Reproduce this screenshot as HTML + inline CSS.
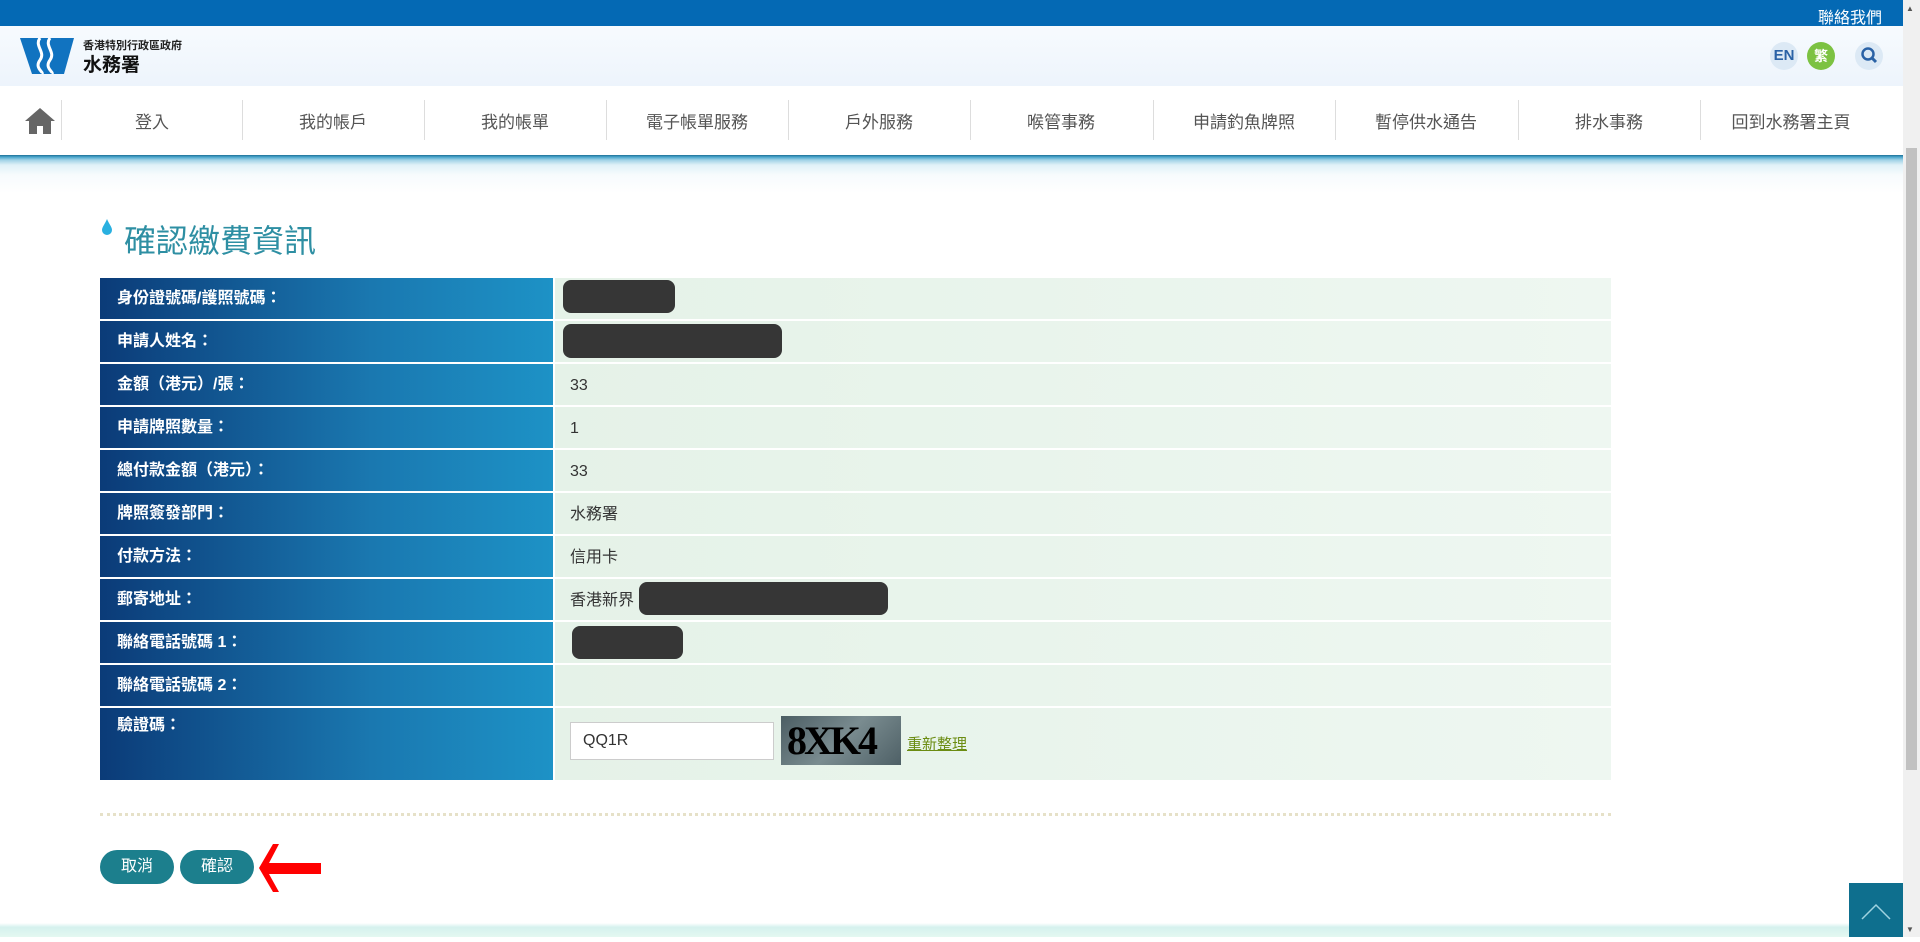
<!DOCTYPE html>
<html><head><meta charset="utf-8">
<style>
*{margin:0;padding:0;box-sizing:border-box}
body{width:1920px;height:937px;overflow:hidden;position:relative;background:#fff;font-family:"Liberation Sans","Noto Sans CJK TC",sans-serif;}
.abs{position:absolute}
#top{left:0;top:0;width:1903px;height:26px;background:#0469b4}
#top span{position:absolute;right:21px;top:4px;color:#fff;font-size:16px}
#hdr{left:0;top:26px;width:1903px;height:60px;background:linear-gradient(#f7fbfe,#edf4fc)}
#nav{left:0;top:86px;width:1903px;height:69px;background:#fff}
.sep{position:absolute;top:14px;width:1px;height:40px;background:#ddd}
.ni{position:absolute;top:22px;width:182px;text-align:center;color:#555;font-size:17px}
#water{left:0;top:155px;width:1903px;height:40px;background:linear-gradient(#1d6f96 0,#4aa6cc 2px,#9fd2e6 5px,#e0f1f8 10px,#f7fbfd 20px,#fff 38px)}
.circ{position:absolute;top:16px;width:28px;height:28px;border-radius:50%;text-align:center;line-height:28px;font-size:15px;font-weight:bold}
.row{position:absolute;left:100px;width:1511px;height:41px}
.lab{position:absolute;left:0;top:0;width:453px;height:100%;background:linear-gradient(90deg,#0b3b78,#1a78b0 60%,#1d92c6);color:#fff;font-weight:bold;font-size:16px;line-height:41px;padding-left:17px}
.val{position:absolute;left:455px;top:0;right:0;height:100%;background:linear-gradient(90deg,#e5f2e8,#eef7f1);color:#333;font-size:16px;line-height:43px;padding-left:15px}
.blob{position:absolute;background:#363636;border-radius:8px}
.btn{position:absolute;top:850px;height:34px;width:74px;border-radius:17px;background:#1c7f8d;color:#fff;font-size:16px;text-align:center;line-height:34px}
</style></head><body>
<div id="top" class="abs"><span>聯絡我們</span></div>
<div id="hdr" class="abs">
<svg class="abs" style="left:20px;top:12px" width="56" height="36" viewBox="0 0 56 36"><polygon points="0,0 54,0 44,36 12,36" fill="#1173c0"/><path d="M20 0c-6 8 6 14 0 22s4 12 2 14M30 0c-6 8 6 14 0 22s4 12 2 14" stroke="#fff" stroke-width="3" fill="none"/></svg>
<div class="abs" style="left:83px;top:11px;font-size:11px;color:#222;font-weight:bold">香港特別行政區政府</div>
<div class="abs" style="left:83px;top:24px;font-size:19px;color:#111;font-weight:bold">水務署</div>
<div class="circ" style="left:1770px;background:#dce9f5;color:#2a62a6">EN</div>
<div class="circ" style="left:1807px;background:#7cc242;color:#fff;font-size:14px">繁</div>
<div class="circ" style="left:1855px;background:#dce9f5;color:#2a62a6">
<svg width="28" height="28"><circle cx="13" cy="12" r="5.5" stroke="#2a62a6" stroke-width="2.5" fill="none"/><line x1="17" y1="16" x2="21" y2="20" stroke="#2a62a6" stroke-width="3"/></svg></div>
</div>
<div id="nav" class="abs">
<svg class="abs" style="left:25px;top:22px" width="30" height="26" viewBox="0 0 30 26"><path d="M15 0L0 13h4v13h8v-8h6v8h8V13h4L15 0z" fill="#666"/></svg>
<div class="sep" style="left:61px"></div><div class="sep" style="left:242px"></div><div class="sep" style="left:424px"></div><div class="sep" style="left:606px"></div><div class="sep" style="left:788px"></div><div class="sep" style="left:970px"></div><div class="sep" style="left:1153px"></div><div class="sep" style="left:1335px"></div><div class="sep" style="left:1518px"></div><div class="sep" style="left:1700px"></div>
<div class="ni" style="left:61px">登入</div><div class="ni" style="left:242px">我的帳戶</div><div class="ni" style="left:424px">我的帳單</div><div class="ni" style="left:606px">電子帳單服務</div><div class="ni" style="left:788px">戶外服務</div><div class="ni" style="left:970px">喉管事務</div><div class="ni" style="left:1153px">申請釣魚牌照</div><div class="ni" style="left:1335px">暫停供水通告</div><div class="ni" style="left:1518px">排水事務</div><div class="ni" style="left:1700px">回到水務署主頁</div>
</div>
<div id="water" class="abs"></div>
<svg class="abs" style="left:101px;top:218px" width="12" height="18"><path d="M6 1C4 6 1 9 1 12a5 5 0 0010 0c0-3-3-6-5-11z" fill="#29b0e0"/></svg>
<div class="abs" style="left:124px;top:216px;font-size:32px;color:#2e8fa3">確認繳費資訊</div>

<div class="row" style="top:278px"><div class="lab">身份證號碼/護照號碼：</div><div class="val"></div></div>
<div class="row" style="top:321px"><div class="lab">申請人姓名：</div><div class="val"></div></div>
<div class="row" style="top:364px"><div class="lab">金額（港元）/張：</div><div class="val">33</div></div>
<div class="row" style="top:407px"><div class="lab">申請牌照數量：</div><div class="val">1</div></div>
<div class="row" style="top:450px"><div class="lab">總付款金額（港元）：</div><div class="val">33</div></div>
<div class="row" style="top:493px"><div class="lab">牌照簽發部門：</div><div class="val">水務署</div></div>
<div class="row" style="top:536px"><div class="lab">付款方法：</div><div class="val">信用卡</div></div>
<div class="row" style="top:579px"><div class="lab">郵寄地址：</div><div class="val">香港新界</div></div>
<div class="row" style="top:622px"><div class="lab">聯絡電話號碼 1：</div><div class="val"></div></div>
<div class="row" style="top:665px"><div class="lab">聯絡電話號碼 2：</div><div class="val"></div></div>
<div class="row" style="top:708px;height:72px"><div class="lab" style="line-height:36px">驗證碼：</div><div class="val"></div></div>

<div class="blob" style="left:563px;top:280px;width:112px;height:33px"></div>
<div class="blob" style="left:563px;top:324px;width:219px;height:34px"></div>
<div class="blob" style="left:639px;top:582px;width:249px;height:33px"></div>
<div class="blob" style="left:572px;top:626px;width:111px;height:33px"></div>

<div class="abs" style="left:570px;top:722px;width:204px;height:38px;background:#fff;border:1px solid #ccc;font-size:16px;color:#333;line-height:36px;padding-left:12px">QQ1R</div>
<div class="abs" style="left:781px;top:716px;width:120px;height:49px;background:linear-gradient(135deg,#4b5d63,#7a8c90,#4e6066);font-family:'Liberation Serif',serif;font-size:40px;font-weight:bold;color:#000;line-height:49px;padding-left:6px;letter-spacing:-3px">8XK4</div>
<div class="abs" style="left:907px;top:733px;font-size:15px;color:#6b8c12;text-decoration:underline">重新整理</div>

<div class="abs" style="left:100px;top:813px;width:1511px;border-top:3px dotted #e6e1c8"></div>
<div class="btn" style="left:100px">取消</div>
<div class="btn" style="left:180px">確認</div>
<svg class="abs" style="left:259px;top:843px" width="64" height="50"><polygon points="0,25 14,1 20,1 10,20 62,20 62,31 10,31 20,49 14,49" fill="#f00"/></svg>

<div class="abs" style="left:0;top:923px;width:1903px;height:14px;background:linear-gradient(#fff,#d5f1ee 30%,#e4f8f1)"></div>
<div class="abs" style="left:1849px;top:883px;width:54px;height:54px;background:#0e6f8e">
<svg width="54" height="54"><polyline points="13,36 27,22 41,36" stroke="#9fd3e0" stroke-width="1.5" fill="none"/></svg></div>
<div class="abs" style="left:1903px;top:0;width:17px;height:937px;background:#f0f0f0"></div>
<div class="abs" style="left:1906px;top:148px;width:11px;height:622px;background:#c1c1c1"></div>
<div class="abs" style="left:1906px;top:4px;font-size:8px;color:#555">▲</div>
<div class="abs" style="left:1906px;top:925px;font-size:8px;color:#555">▼</div>
</body></html>
